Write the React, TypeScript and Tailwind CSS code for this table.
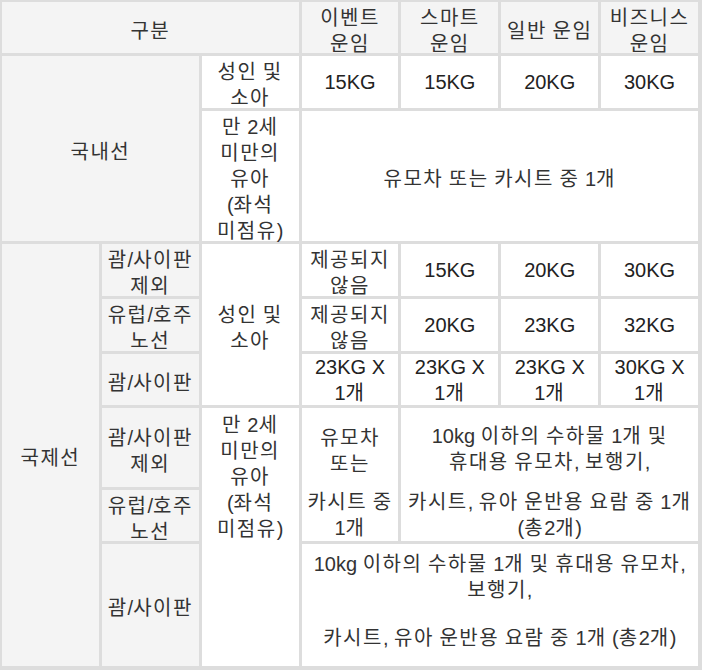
import React from "react";

const HANGUL = /([\uAC00-\uD7A3\u3131-\u318E]+)/;

function T({ t }: { t: string }) {
  const parts = t.split(HANGUL);
  return (
    <>
      {parts.map((p, i) =>
        i % 2 === 1 ? (
          <span key={i} className="tracking-[1.5px]">
            {p}
          </span>
        ) : (
          <React.Fragment key={i}>{p}</React.Fragment>
        )
      )}
    </>
  );
}

type CellProps = {
  className?: string;
  head?: boolean;
  k?: boolean;
  children: React.ReactNode;
};

function Cell({ className = "", head = false, k = true, children }: CellProps) {
  return (
    <div
      className={
        (head ? "bg-[#f4f4f4] " : "bg-white ") +
        (k ? "pt-[6px] " : "") +
        "flex flex-col items-center justify-center text-center whitespace-nowrap leading-[26px] " +
        className
      }
    >
      {children}
    </div>
  );
}

function Lines({ items }: { items: string[] }) {
  return (
    <>
      {items.map((t, i) => (
        <span key={i} className="block">
          <T t={t} />
        </span>
      ))}
    </>
  );
}

export default function App() {
  return (
    <div className="w-[702px] h-[670px] bg-[#dddddd] font-['Liberation_Sans','Noto_Sans_CJK_KR',sans-serif] text-[20px] text-[#333333]">
      <div className="grid grid-cols-7 grid-rows-[51px_52px_130px_52px_52px_51px_79px_51px_122px] gap-[3px] pl-[2px] pr-[4px] pt-[2px] pb-[4px] h-full">
        {/* header */}
        <Cell head className="col-start-1 col-span-3 row-start-1"><Lines items={["구분"]} /></Cell>
        <Cell head className="col-start-4 row-start-1"><Lines items={["이벤트", "운임"]} /></Cell>
        <Cell head className="col-start-5 row-start-1"><Lines items={["스마트", "운임"]} /></Cell>
        <Cell head className="col-start-6 row-start-1"><Lines items={["일반 운임"]} /></Cell>
        <Cell head className="col-start-7 row-start-1"><Lines items={["비즈니스", "운임"]} /></Cell>

        {/* 국내선 */}
        <Cell head className="col-start-1 col-span-2 row-start-2 row-span-2"><Lines items={["국내선"]} /></Cell>
        <Cell className="col-start-3 row-start-2"><Lines items={["성인 및", "소아"]} /></Cell>
        <Cell k={false} className="col-start-4 row-start-2 text-[#222]">15KG</Cell>
        <Cell k={false} className="col-start-5 row-start-2 text-[#222]">15KG</Cell>
        <Cell k={false} className="col-start-6 row-start-2 text-[#222]">20KG</Cell>
        <Cell k={false} className="col-start-7 row-start-2 text-[#222]">30KG</Cell>
        <Cell className="col-start-3 row-start-3"><Lines items={["만 2세", "미만의", "유아", "(좌석", "미점유)"]} /></Cell>
        <Cell className="col-start-4 col-span-4 row-start-3"><Lines items={["유모차 또는 카시트 중 1개"]} /></Cell>

        {/* 국제선 */}
        <Cell head className="col-start-1 row-start-4 row-span-6"><Lines items={["국제선"]} /></Cell>
        <Cell head className="col-start-2 row-start-4"><Lines items={["괌/사이판", "제외"]} /></Cell>
        <Cell className="col-start-3 row-start-4 row-span-3"><Lines items={["성인 및", "소아"]} /></Cell>
        <Cell className="col-start-4 row-start-4"><Lines items={["제공되지", "않음"]} /></Cell>
        <Cell k={false} className="col-start-5 row-start-4 text-[#222]">15KG</Cell>
        <Cell k={false} className="col-start-6 row-start-4 text-[#222]">20KG</Cell>
        <Cell k={false} className="col-start-7 row-start-4 text-[#222]">30KG</Cell>

        <Cell head className="col-start-2 row-start-5"><Lines items={["유럽/호주", "노선"]} /></Cell>
        <Cell className="col-start-4 row-start-5"><Lines items={["제공되지", "않음"]} /></Cell>
        <Cell k={false} className="col-start-5 row-start-5 text-[#222]">20KG</Cell>
        <Cell k={false} className="col-start-6 row-start-5 text-[#222]">23KG</Cell>
        <Cell k={false} className="col-start-7 row-start-5 text-[#222]">32KG</Cell>

        <Cell head className="col-start-2 row-start-6"><Lines items={["괌/사이판"]} /></Cell>
        <Cell k={false} className="col-start-4 row-start-6 text-[#222]"><Lines items={["23KG X", "1개"]} /></Cell>
        <Cell k={false} className="col-start-5 row-start-6 text-[#222]"><Lines items={["23KG X", "1개"]} /></Cell>
        <Cell k={false} className="col-start-6 row-start-6 text-[#222]"><Lines items={["23KG X", "1개"]} /></Cell>
        <Cell k={false} className="col-start-7 row-start-6 text-[#222]"><Lines items={["30KG X", "1개"]} /></Cell>

        <Cell head className="col-start-2 row-start-7"><Lines items={["괌/사이판", "제외"]} /></Cell>
        <Cell k={false} className="col-start-3 row-start-7 row-span-3 !justify-start pt-[4px]">
          <Lines items={["만 2세", "미만의", "유아", "(좌석", "미점유)"]} />
        </Cell>
        <Cell k={false} className="col-start-4 row-start-7 row-span-2 !justify-start pt-[17px]">
          <Lines items={["유모차", "또는"]} />
          <span className="block h-[16px]" />
          <Lines items={["카시트 중", "1개"]} />
        </Cell>
        <Cell k={false} className="col-start-5 col-span-3 row-start-7 row-span-2 !justify-start pt-[15px]">
          <Lines items={["10kg 이하의 수하물 1개 및", "휴대용 유모차, 보행기,"]} />
          <span className="block h-[17px]" />
          <Lines items={["카시트, 유아 운반용 요람 중 1개", "(총2개)"]} />
        </Cell>

        <Cell head className="col-start-2 row-start-8"><Lines items={["유럽/호주", "노선"]} /></Cell>

        <Cell head className="col-start-2 row-start-9"><Lines items={["괌/사이판"]} /></Cell>
        <Cell k={false} className="col-start-4 col-span-4 row-start-9 !justify-start pt-[7px]">
          <Lines items={["10kg 이하의 수하물 1개 및 휴대용 유모차,", "보행기,"]} />
          <span className="block h-[22px]" />
          <Lines items={["카시트, 유아 운반용 요람 중 1개 (총2개)"]} />
        </Cell>
      </div>
    </div>
  );
}
